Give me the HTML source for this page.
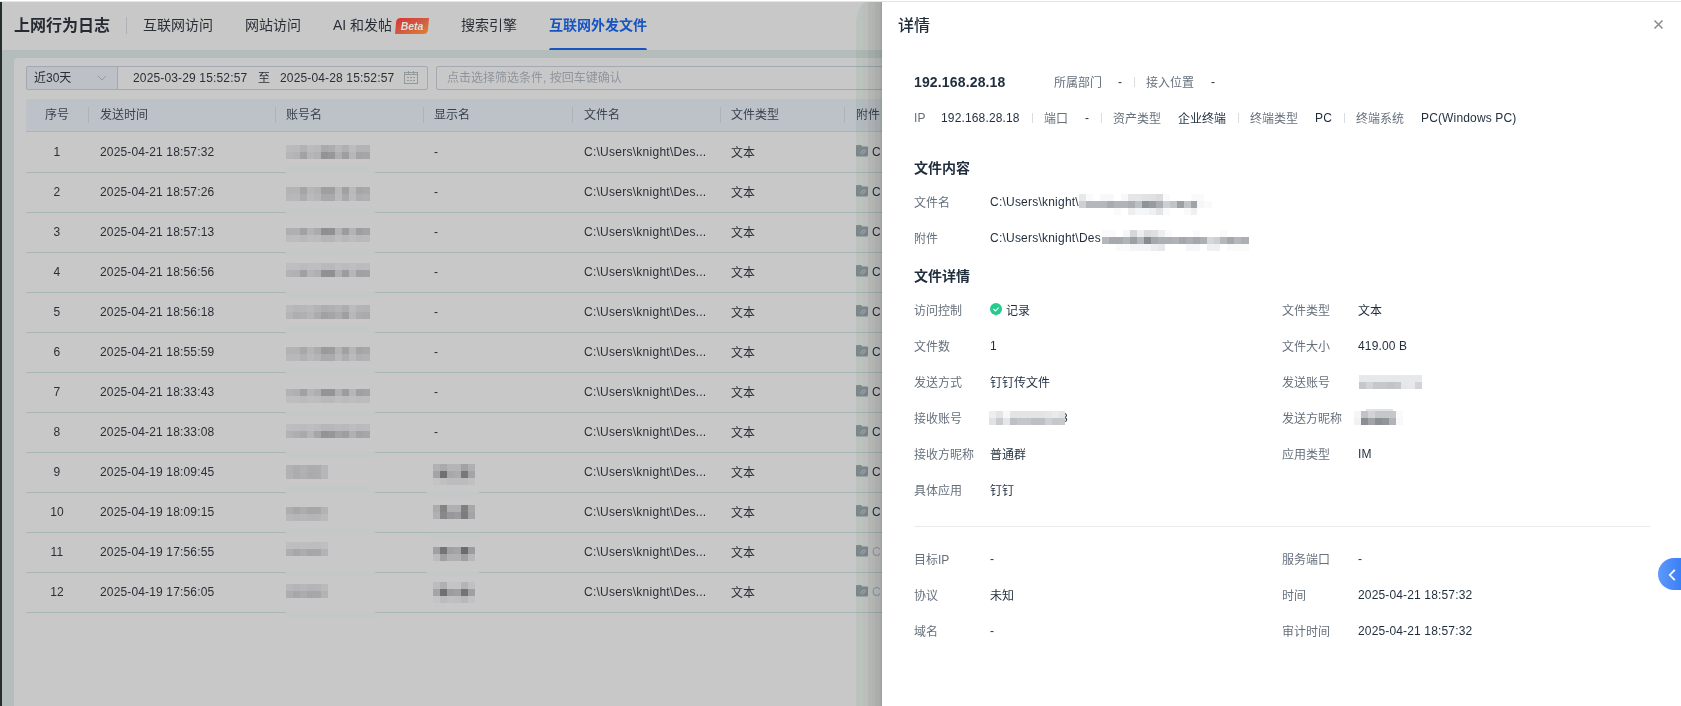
<!DOCTYPE html>
<html lang="zh-CN">
<head>
<meta charset="utf-8">
<title>上网行为日志</title>
<style>
*{box-sizing:border-box;margin:0;padding:0}
html,body{width:1681px;height:706px;overflow:hidden;background:#fff}
body{position:relative;font-family:"Liberation Sans","Noto Sans CJK SC",sans-serif;font-size:12px;color:#1f2d3d}
.abs{position:absolute}
.t{position:absolute;white-space:nowrap;line-height:20px;height:20px;will-change:transform}
.l{letter-spacing:.15px}
svg{display:block}
/* ---------- left dimmed app ---------- */
#topline{left:0;top:0;width:1681px;height:2px;background:linear-gradient(#fff 0,#fff 1px,#e4e4e4 1px,#e4e4e4 2px);z-index:9}
#app{left:0;top:2px;width:900px;height:704px;background:#b4bcbc;overflow:hidden}
#edge{left:0;top:0;width:2px;height:704px;background:#262d2d}
#hdr{left:2px;top:0;width:898px;height:48px;background:#c8c8c8}
#hdr .t{top:13px;font-size:14px;color:#2a2f37}
#hdr .title{left:12px;top:14px;font-size:16px;font-weight:bold;color:#262b33}
#hdr .vd{left:124px;top:15px;width:1px;height:17px;background:#adb1b5}
#hdr .act{color:#1754c2;font-weight:bold}
#hdr .bar{left:547px;top:45.700px;width:98px;height:2.300px;background:#1754c2;border-radius:2px 2px 0 0}
#card{left:14px;top:56px;width:890px;height:660px;background:#c8c8c8;border-radius:4px}
.box{position:absolute;border:1px solid #a2a9b2;background:#c8c8c8;height:24px;top:8px}
.box .t{top:1px;color:#2a2f37}
#thead{left:12px;top:41px;width:880px;height:33px;background:#bdc1c8;border-bottom:1px solid #a9b6b8}
#thead .t{top:6px;color:#39424e}
#thead .vd{position:absolute;top:8px;width:1px;height:16px;background:#b1b3b6}
.row{position:absolute;left:12px;width:880px;height:41px;border-bottom:1px solid #a8b6b6}
.row .t{top:10px;color:#2a2f37}
.row .n{width:62px;left:0;text-align:center}
.mz{position:absolute}
/* ---------- panel ---------- */
#shadow{left:855.6px;top:2px;width:26.4px;height:710px;border-top-left-radius:11px 24px;background:linear-gradient(90deg,rgba(0,100,33,.06) 0px,rgba(0,100,33,.06) 7.4px,rgba(0,0,0,.05) 7.4px,rgba(0,0,0,.05) 12.4px,rgba(0,40,0,.10) 12.4px,rgba(0,40,0,.10) 15.9px,rgba(0,0,0,.10) 15.9px,rgba(0,0,0,.10) 19.4px,rgba(0,29,0,.14) 19.4px,rgba(0,29,0,.14) 21.9px,rgba(0,0,0,.14) 21.9px,rgba(0,0,0,.14) 23.9px,rgba(0,22,0,.18) 23.9px,rgba(0,22,0,.18) 25.4px,rgba(0,0,0,.20) 25.4px,rgba(0,0,0,.20) 26.4px)}
#panel{left:882px;top:2px;width:820px;height:760px;background:#fff}
#panel .t{color:#1f2d3d}
#panel .g{color:#66707c}
#panel .h{font-weight:bold;font-size:14px;color:#1f2d3d}
#panel .vd{position:absolute;width:1px;height:10px;background:#d9dde2}
</style>
</head>
<body>
<div class="abs" id="topline"></div>

<div class="abs" id="app">
  <div class="abs" id="hdr">
    <div class="t title">上网行为日志</div>
    <div class="abs vd"></div>
    <div class="t" style="left:141px">互联网访问</div>
    <div class="t" style="left:243px">网站访问</div>
    <div class="t" style="left:331px">AI 和发帖</div>
    <svg class="abs" style="left:392px;top:15px;will-change:transform" width="36" height="18" viewBox="0 0 36 18"><defs><linearGradient id="bg1" x1="0" y1="0" x2="1" y2="1"><stop offset="0" stop-color="#d8352f"/><stop offset=".5" stop-color="#d05a42"/><stop offset="1" stop-color="#e0832f"/></linearGradient></defs><path d="M6.500 1H35L34 12.500Q33.600 17 29.500 17H1L2 5.500Q2.400 1 6.500 1Z" fill="url(#bg1)"/><text x="18" y="13" text-anchor="middle" font-family="Liberation Sans, sans-serif" font-size="11" font-weight="bold" font-style="italic" fill="#dfe1e1" textLength="22.500" lengthAdjust="spacingAndGlyphs">Beta</text></svg>
    <div class="t" style="left:459px">搜索引擎</div>
    <div class="t act" style="left:547px">互联网外发文件</div>
    <div class="abs bar"></div>
  </div>
  <div class="abs" id="edge"></div>

  <div class="abs" id="card">
    <!-- filter row -->
    <div class="box" style="left:12px;width:92px;border-radius:2px 0 0 2px;background:#bdc0c6">
      <div class="t" style="left:7px">近30天</div>
      <svg class="abs" style="left:70px;top:8px" width="10" height="6" viewBox="0 0 10 6"><path d="M0.800 0.800L5 5L9.200 0.800" fill="none" stroke="#969ba2" stroke-width="1"/></svg>
    </div>
    <div class="box" style="left:103px;width:311px;border-radius:0 2px 2px 0">
      <div class="t l" style="left:15px">2025-03-29 15:52:57</div>
      <div class="t" style="left:140px">至</div>
      <div class="t l" style="left:162px">2025-04-28 15:52:57</div>
      <svg class="abs" style="left:286px;top:4px" width="15" height="14" viewBox="0 0 15 14"><g fill="none" stroke="#8e9a9b" stroke-width="1"><rect x="0.500" y="1.500" width="13" height="11"/><path d="M0.500 3.500H13.500M4.500 0V3.500M9.500 0V3.500"/><path d="M3 6.500H5M6 6.500H8M9 6.500H11M3 9.500H5M6 9.500H8M9 9.500H11"/></g></svg>
    </div>
    <div class="box" style="left:422px;width:480px;border-radius:2px">
      <div class="t" style="left:10px;color:#8e959c">点击选择筛选条件, 按回车键确认</div>
    </div>

    <!-- table head -->
    <div class="abs" id="thead">
      <div class="t" style="left:0;width:62px;text-align:center">序号</div>
      <div class="vd" style="left:62px"></div>
      <div class="t" style="left:74px">发送时间</div>
      <div class="vd" style="left:249px"></div>
      <div class="t" style="left:260px">账号名</div>
      <div class="vd" style="left:397px"></div>
      <div class="t" style="left:408px">显示名</div>
      <div class="vd" style="left:546px"></div>
      <div class="t" style="left:558px">文件名</div>
      <div class="vd" style="left:694px"></div>
      <div class="t" style="left:705px">文件类型</div>
      <div class="vd" style="left:818px"></div>
      <div class="t" style="left:830px">附件</div>
    </div>
    <div class="row" style="top:74px"><div class="t n l">1</div><div class="t l" style="left:74px">2025-04-21 18:57:32</div><div class="t l" style="left:408px">-</div><div class="t" style="left:558px;letter-spacing:.26px">C:\Users\knight\Des...</div><div class="t" style="left:705px;top:11px">文本</div><svg class="abs" style="left:830px;top:13px" width="12" height="12" viewBox="0 0 12 12"><path d="M0 1Q0 0 1 0H4.600Q5.200 0 5.600 0.600L6.200 1.500H11Q12 1.500 12 2.500V10.500Q12 11.500 11 11.500H1Q0 11.500 0 10.500Z" fill="#838a92"/><path d="M4.200 8.300L7.300 5.200Q8.300 4.400 9 5.200Q9.600 6 8.800 6.800L6.200 9.300" stroke="#a6abb2" stroke-width="1.100" fill="none"/></svg><div class="t" style="left:846px;color:#2a2f37">C</div></div>
    <div class="row" style="top:114px"><div class="t n l">2</div><div class="t l" style="left:74px">2025-04-21 18:57:26</div><div class="t l" style="left:408px">-</div><div class="t" style="left:558px;letter-spacing:.26px">C:\Users\knight\Des...</div><div class="t" style="left:705px;top:11px">文本</div><svg class="abs" style="left:830px;top:13px" width="12" height="12" viewBox="0 0 12 12"><path d="M0 1Q0 0 1 0H4.600Q5.200 0 5.600 0.600L6.200 1.500H11Q12 1.500 12 2.500V10.500Q12 11.500 11 11.500H1Q0 11.500 0 10.500Z" fill="#838a92"/><path d="M4.200 8.300L7.300 5.200Q8.300 4.400 9 5.200Q9.600 6 8.800 6.800L6.200 9.300" stroke="#a6abb2" stroke-width="1.100" fill="none"/></svg><div class="t" style="left:846px;color:#2a2f37">C</div></div>
    <div class="row" style="top:154px"><div class="t n l">3</div><div class="t l" style="left:74px">2025-04-21 18:57:13</div><div class="t l" style="left:408px">-</div><div class="t" style="left:558px;letter-spacing:.26px">C:\Users\knight\Des...</div><div class="t" style="left:705px;top:11px">文本</div><svg class="abs" style="left:830px;top:13px" width="12" height="12" viewBox="0 0 12 12"><path d="M0 1Q0 0 1 0H4.600Q5.200 0 5.600 0.600L6.200 1.500H11Q12 1.500 12 2.500V10.500Q12 11.500 11 11.500H1Q0 11.500 0 10.500Z" fill="#838a92"/><path d="M4.200 8.300L7.300 5.200Q8.300 4.400 9 5.200Q9.600 6 8.800 6.800L6.200 9.300" stroke="#a6abb2" stroke-width="1.100" fill="none"/></svg><div class="t" style="left:846px;color:#2a2f37">C</div></div>
    <div class="row" style="top:194px"><div class="t n l">4</div><div class="t l" style="left:74px">2025-04-21 18:56:56</div><div class="t l" style="left:408px">-</div><div class="t" style="left:558px;letter-spacing:.26px">C:\Users\knight\Des...</div><div class="t" style="left:705px;top:11px">文本</div><svg class="abs" style="left:830px;top:13px" width="12" height="12" viewBox="0 0 12 12"><path d="M0 1Q0 0 1 0H4.600Q5.200 0 5.600 0.600L6.200 1.500H11Q12 1.500 12 2.500V10.500Q12 11.500 11 11.500H1Q0 11.500 0 10.500Z" fill="#838a92"/><path d="M4.200 8.300L7.300 5.200Q8.300 4.400 9 5.200Q9.600 6 8.800 6.800L6.200 9.300" stroke="#a6abb2" stroke-width="1.100" fill="none"/></svg><div class="t" style="left:846px;color:#2a2f37">C</div></div>
    <div class="row" style="top:234px"><div class="t n l">5</div><div class="t l" style="left:74px">2025-04-21 18:56:18</div><div class="t l" style="left:408px">-</div><div class="t" style="left:558px;letter-spacing:.26px">C:\Users\knight\Des...</div><div class="t" style="left:705px;top:11px">文本</div><svg class="abs" style="left:830px;top:13px" width="12" height="12" viewBox="0 0 12 12"><path d="M0 1Q0 0 1 0H4.600Q5.200 0 5.600 0.600L6.200 1.500H11Q12 1.500 12 2.500V10.500Q12 11.500 11 11.500H1Q0 11.500 0 10.500Z" fill="#838a92"/><path d="M4.200 8.300L7.300 5.200Q8.300 4.400 9 5.200Q9.600 6 8.800 6.800L6.200 9.300" stroke="#a6abb2" stroke-width="1.100" fill="none"/></svg><div class="t" style="left:846px;color:#2a2f37">C</div></div>
    <div class="row" style="top:274px"><div class="t n l">6</div><div class="t l" style="left:74px">2025-04-21 18:55:59</div><div class="t l" style="left:408px">-</div><div class="t" style="left:558px;letter-spacing:.26px">C:\Users\knight\Des...</div><div class="t" style="left:705px;top:11px">文本</div><svg class="abs" style="left:830px;top:13px" width="12" height="12" viewBox="0 0 12 12"><path d="M0 1Q0 0 1 0H4.600Q5.200 0 5.600 0.600L6.200 1.500H11Q12 1.500 12 2.500V10.500Q12 11.500 11 11.500H1Q0 11.500 0 10.500Z" fill="#838a92"/><path d="M4.200 8.300L7.300 5.200Q8.300 4.400 9 5.200Q9.600 6 8.800 6.800L6.200 9.300" stroke="#a6abb2" stroke-width="1.100" fill="none"/></svg><div class="t" style="left:846px;color:#2a2f37">C</div></div>
    <div class="row" style="top:314px"><div class="t n l">7</div><div class="t l" style="left:74px">2025-04-21 18:33:43</div><div class="t l" style="left:408px">-</div><div class="t" style="left:558px;letter-spacing:.26px">C:\Users\knight\Des...</div><div class="t" style="left:705px;top:11px">文本</div><svg class="abs" style="left:830px;top:13px" width="12" height="12" viewBox="0 0 12 12"><path d="M0 1Q0 0 1 0H4.600Q5.200 0 5.600 0.600L6.200 1.500H11Q12 1.500 12 2.500V10.500Q12 11.500 11 11.500H1Q0 11.500 0 10.500Z" fill="#838a92"/><path d="M4.200 8.300L7.300 5.200Q8.300 4.400 9 5.200Q9.600 6 8.800 6.800L6.200 9.300" stroke="#a6abb2" stroke-width="1.100" fill="none"/></svg><div class="t" style="left:846px;color:#2a2f37">C</div></div>
    <div class="row" style="top:354px"><div class="t n l">8</div><div class="t l" style="left:74px">2025-04-21 18:33:08</div><div class="t l" style="left:408px">-</div><div class="t" style="left:558px;letter-spacing:.26px">C:\Users\knight\Des...</div><div class="t" style="left:705px;top:11px">文本</div><svg class="abs" style="left:830px;top:13px" width="12" height="12" viewBox="0 0 12 12"><path d="M0 1Q0 0 1 0H4.600Q5.200 0 5.600 0.600L6.200 1.500H11Q12 1.500 12 2.500V10.500Q12 11.500 11 11.500H1Q0 11.500 0 10.500Z" fill="#838a92"/><path d="M4.200 8.300L7.300 5.200Q8.300 4.400 9 5.200Q9.600 6 8.800 6.800L6.200 9.300" stroke="#a6abb2" stroke-width="1.100" fill="none"/></svg><div class="t" style="left:846px;color:#2a2f37">C</div></div>
    <div class="row" style="top:394px"><div class="t n l">9</div><div class="t l" style="left:74px">2025-04-19 18:09:45</div><div class="t" style="left:558px;letter-spacing:.26px">C:\Users\knight\Des...</div><div class="t" style="left:705px;top:11px">文本</div><svg class="abs" style="left:830px;top:13px" width="12" height="12" viewBox="0 0 12 12"><path d="M0 1Q0 0 1 0H4.600Q5.200 0 5.600 0.600L6.200 1.500H11Q12 1.500 12 2.500V10.500Q12 11.500 11 11.500H1Q0 11.500 0 10.500Z" fill="#838a92"/><path d="M4.200 8.300L7.300 5.200Q8.300 4.400 9 5.200Q9.600 6 8.800 6.800L6.200 9.300" stroke="#a6abb2" stroke-width="1.100" fill="none"/></svg><div class="t" style="left:846px;color:#2a2f37">C</div></div>
    <div class="row" style="top:434px"><div class="t n l">10</div><div class="t l" style="left:74px">2025-04-19 18:09:15</div><div class="t" style="left:558px;letter-spacing:.26px">C:\Users\knight\Des...</div><div class="t" style="left:705px;top:11px">文本</div><svg class="abs" style="left:830px;top:13px" width="12" height="12" viewBox="0 0 12 12"><path d="M0 1Q0 0 1 0H4.600Q5.200 0 5.600 0.600L6.200 1.500H11Q12 1.500 12 2.500V10.500Q12 11.500 11 11.500H1Q0 11.500 0 10.500Z" fill="#838a92"/><path d="M4.200 8.300L7.300 5.200Q8.300 4.400 9 5.200Q9.600 6 8.800 6.800L6.200 9.300" stroke="#a6abb2" stroke-width="1.100" fill="none"/></svg><div class="t" style="left:846px;color:#2a2f37">C</div></div>
    <div class="row" style="top:474px"><div class="t n l">11</div><div class="t l" style="left:74px">2025-04-19 17:56:55</div><div class="t" style="left:558px;letter-spacing:.26px">C:\Users\knight\Des...</div><div class="t" style="left:705px;top:11px">文本</div><svg class="abs" style="left:830px;top:13px" width="12" height="12" viewBox="0 0 12 12"><path d="M0 1Q0 0 1 0H4.600Q5.200 0 5.600 0.600L6.200 1.500H11Q12 1.500 12 2.500V10.500Q12 11.500 11 11.500H1Q0 11.500 0 10.500Z" fill="#838a92"/><path d="M4.200 8.300L7.300 5.200Q8.300 4.400 9 5.200Q9.600 6 8.800 6.800L6.200 9.300" stroke="#a6abb2" stroke-width="1.100" fill="none"/></svg><div class="t" style="left:846px;color:#9a9fa5">C</div></div>
    <div class="row" style="top:514px"><div class="t n l">12</div><div class="t l" style="left:74px">2025-04-19 17:56:05</div><div class="t" style="left:558px;letter-spacing:.26px">C:\Users\knight\Des...</div><div class="t" style="left:705px;top:11px">文本</div><svg class="abs" style="left:830px;top:13px" width="12" height="12" viewBox="0 0 12 12"><path d="M0 1Q0 0 1 0H4.600Q5.200 0 5.600 0.600L6.200 1.500H11Q12 1.500 12 2.500V10.500Q12 11.500 11 11.500H1Q0 11.500 0 10.500Z" fill="#838a92"/><path d="M4.200 8.300L7.300 5.200Q8.300 4.400 9 5.200Q9.600 6 8.800 6.800L6.200 9.300" stroke="#a6abb2" stroke-width="1.100" fill="none"/></svg><div class="t" style="left:846px;color:#9a9fa5">C</div></div>
    <div class="abs" style="left:272px;top:107.71px;width:89px;height:7px;background:#c4c8c7"></div>
    <svg class="mz" style="left:272px;top:86.8px" width="84.64" height="14.94" viewBox="0 0 84.64 14.94" shape-rendering="crispEdges"><rect x="0" y="0" width="7.27" height="7.27" fill="#bbbbbe"/><rect x="6.97" y="0" width="7.27" height="7.27" fill="#bababd"/><rect x="13.94" y="0" width="7.27" height="7.27" fill="#b2b2b5"/><rect x="20.91" y="0" width="7.27" height="7.27" fill="#bbbbbe"/><rect x="27.88" y="0" width="7.27" height="7.27" fill="#b9b9bc"/><rect x="34.85" y="0" width="7.27" height="7.27" fill="#aaaaad"/><rect x="41.82" y="0" width="7.27" height="7.27" fill="#adadb0"/><rect x="48.79" y="0" width="7.27" height="7.27" fill="#b8b8bb"/><rect x="55.76" y="0" width="7.27" height="7.27" fill="#b0b0b3"/><rect x="62.73" y="0" width="7.27" height="7.27" fill="#bcbcbf"/><rect x="69.7" y="0" width="7.27" height="7.27" fill="#b3b3b6"/><rect x="76.67" y="0" width="7.27" height="7.27" fill="#b3b3b6"/><rect x="0" y="6.97" width="7.27" height="7.27" fill="#b6b6b9"/><rect x="6.97" y="6.97" width="7.27" height="7.27" fill="#b3b3b6"/><rect x="13.94" y="6.97" width="7.27" height="7.27" fill="#a2a2a5"/><rect x="20.91" y="6.97" width="7.27" height="7.27" fill="#b6b6b9"/><rect x="27.88" y="6.97" width="7.27" height="7.27" fill="#b2b2b5"/><rect x="34.85" y="6.97" width="7.27" height="7.27" fill="#939396"/><rect x="41.82" y="6.97" width="7.27" height="7.27" fill="#98989b"/><rect x="48.79" y="6.97" width="7.27" height="7.27" fill="#afafb2"/><rect x="55.76" y="6.97" width="7.27" height="7.27" fill="#9e9ea1"/><rect x="62.73" y="6.97" width="7.27" height="7.27" fill="#b7b7ba"/><rect x="69.7" y="6.97" width="7.27" height="7.27" fill="#a4a4a7"/><rect x="76.67" y="6.97" width="7.27" height="7.27" fill="#a6a6a9"/></svg>
    <div class="abs" style="left:272px;top:149.53px;width:89px;height:7px;background:#c4c8c7"></div>
    <svg class="mz" style="left:272px;top:128.62px" width="84.64" height="14.94" viewBox="0 0 84.64 14.94" shape-rendering="crispEdges"><rect x="0" y="0" width="7.27" height="7.27" fill="#b4b4b7"/><rect x="6.97" y="0" width="7.27" height="7.27" fill="#b4b4b7"/><rect x="13.94" y="0" width="7.27" height="7.27" fill="#a5a5a8"/><rect x="20.91" y="0" width="7.27" height="7.27" fill="#b7b7ba"/><rect x="27.88" y="0" width="7.27" height="7.27" fill="#b2b2b5"/><rect x="34.85" y="0" width="7.27" height="7.27" fill="#9f9fa2"/><rect x="41.82" y="0" width="7.27" height="7.27" fill="#9f9fa2"/><rect x="48.79" y="0" width="7.27" height="7.27" fill="#b8b8bb"/><rect x="55.76" y="0" width="7.27" height="7.27" fill="#a1a1a4"/><rect x="62.73" y="0" width="7.27" height="7.27" fill="#b9b9bc"/><rect x="69.7" y="0" width="7.27" height="7.27" fill="#a6a6a9"/><rect x="76.67" y="0" width="7.27" height="7.27" fill="#a9a9ac"/><rect x="0" y="6.97" width="7.27" height="7.27" fill="#b7b7ba"/><rect x="6.97" y="6.97" width="7.27" height="7.27" fill="#b8b8bb"/><rect x="13.94" y="6.97" width="7.27" height="7.27" fill="#adadb0"/><rect x="20.91" y="6.97" width="7.27" height="7.27" fill="#bababd"/><rect x="27.88" y="6.97" width="7.27" height="7.27" fill="#b6b6b9"/><rect x="34.85" y="6.97" width="7.27" height="7.27" fill="#a9a9ac"/><rect x="41.82" y="6.97" width="7.27" height="7.27" fill="#a9a9ac"/><rect x="48.79" y="6.97" width="7.27" height="7.27" fill="#bababd"/><rect x="55.76" y="6.97" width="7.27" height="7.27" fill="#aaaaad"/><rect x="62.73" y="6.97" width="7.27" height="7.27" fill="#bbbbbe"/><rect x="69.7" y="6.97" width="7.27" height="7.27" fill="#aeaeb1"/><rect x="76.67" y="6.97" width="7.27" height="7.27" fill="#b0b0b3"/></svg>
    <div class="abs" style="left:272px;top:191.35px;width:89px;height:7px;background:#c4c8c7"></div>
    <svg class="mz" style="left:272px;top:170.44px" width="84.64" height="14.94" viewBox="0 0 84.64 14.94" shape-rendering="crispEdges"><rect x="0" y="0" width="7.27" height="7.27" fill="#afafb2"/><rect x="6.97" y="0" width="7.27" height="7.27" fill="#b0b0b3"/><rect x="13.94" y="0" width="7.27" height="7.27" fill="#a1a1a4"/><rect x="20.91" y="0" width="7.27" height="7.27" fill="#b3b3b6"/><rect x="27.88" y="0" width="7.27" height="7.27" fill="#ababae"/><rect x="34.85" y="0" width="7.27" height="7.27" fill="#8f8f92"/><rect x="41.82" y="0" width="7.27" height="7.27" fill="#919194"/><rect x="48.79" y="0" width="7.27" height="7.27" fill="#b3b3b6"/><rect x="55.76" y="0" width="7.27" height="7.27" fill="#9c9c9f"/><rect x="62.73" y="0" width="7.27" height="7.27" fill="#b3b3b6"/><rect x="69.7" y="0" width="7.27" height="7.27" fill="#9e9ea1"/><rect x="76.67" y="0" width="7.27" height="7.27" fill="#a3a3a6"/><rect x="0" y="6.97" width="7.27" height="7.27" fill="#bcbcbf"/><rect x="6.97" y="6.97" width="7.27" height="7.27" fill="#bdbdc0"/><rect x="13.94" y="6.97" width="7.27" height="7.27" fill="#b9b9bc"/><rect x="20.91" y="6.97" width="7.27" height="7.27" fill="#bdbdc0"/><rect x="27.88" y="6.97" width="7.27" height="7.27" fill="#bcbcbf"/><rect x="34.85" y="6.97" width="7.27" height="7.27" fill="#b6b6b9"/><rect x="41.82" y="6.97" width="7.27" height="7.27" fill="#b6b6b9"/><rect x="48.79" y="6.97" width="7.27" height="7.27" fill="#bdbdc0"/><rect x="55.76" y="6.97" width="7.27" height="7.27" fill="#b8b8bb"/><rect x="62.73" y="6.97" width="7.27" height="7.27" fill="#bdbdc0"/><rect x="69.7" y="6.97" width="7.27" height="7.27" fill="#b9b9bc"/><rect x="76.67" y="6.97" width="7.27" height="7.27" fill="#bababd"/></svg>
    <div class="abs" style="left:272px;top:233.17px;width:89px;height:7px;background:#c4c8c7"></div>
    <svg class="mz" style="left:272px;top:205.29px" width="84.64" height="14.94" viewBox="0 0 84.64 14.94" shape-rendering="crispEdges"><rect x="0" y="0" width="7.27" height="7.27" fill="#bebec1"/><rect x="6.97" y="0" width="7.27" height="7.27" fill="#bebec1"/><rect x="13.94" y="0" width="7.27" height="7.27" fill="#bbbbbe"/><rect x="20.91" y="0" width="7.27" height="7.27" fill="#bebec1"/><rect x="27.88" y="0" width="7.27" height="7.27" fill="#bebec1"/><rect x="34.85" y="0" width="7.27" height="7.27" fill="#b9b9bc"/><rect x="41.82" y="0" width="7.27" height="7.27" fill="#b9b9bc"/><rect x="48.79" y="0" width="7.27" height="7.27" fill="#bebec1"/><rect x="55.76" y="0" width="7.27" height="7.27" fill="#bbbbbe"/><rect x="62.73" y="0" width="7.27" height="7.27" fill="#bebec1"/><rect x="69.7" y="0" width="7.27" height="7.27" fill="#bbbbbe"/><rect x="76.67" y="0" width="7.27" height="7.27" fill="#bcbcbf"/><rect x="0" y="6.97" width="7.27" height="7.27" fill="#b3b3b6"/><rect x="6.97" y="6.97" width="7.27" height="7.27" fill="#b1b1b4"/><rect x="13.94" y="6.97" width="7.27" height="7.27" fill="#a0a0a3"/><rect x="20.91" y="6.97" width="7.27" height="7.27" fill="#b5b5b8"/><rect x="27.88" y="6.97" width="7.27" height="7.27" fill="#b0b0b3"/><rect x="34.85" y="6.97" width="7.27" height="7.27" fill="#919194"/><rect x="41.82" y="6.97" width="7.27" height="7.27" fill="#909093"/><rect x="48.79" y="6.97" width="7.27" height="7.27" fill="#b0b0b3"/><rect x="55.76" y="6.97" width="7.27" height="7.27" fill="#9c9c9f"/><rect x="62.73" y="6.97" width="7.27" height="7.27" fill="#b6b6b9"/><rect x="69.7" y="6.97" width="7.27" height="7.27" fill="#a1a1a4"/><rect x="76.67" y="6.97" width="7.27" height="7.27" fill="#a2a2a5"/></svg>
    <div class="abs" style="left:272px;top:268.02px;width:89px;height:7px;background:#c4c8c7"></div>
    <svg class="mz" style="left:272px;top:247.11px" width="84.64" height="14.94" viewBox="0 0 84.64 14.94" shape-rendering="crispEdges"><rect x="0" y="0" width="7.27" height="7.27" fill="#bababd"/><rect x="6.97" y="0" width="7.27" height="7.27" fill="#b6b6b9"/><rect x="13.94" y="0" width="7.27" height="7.27" fill="#b7b7ba"/><rect x="20.91" y="0" width="7.27" height="7.27" fill="#bababd"/><rect x="27.88" y="0" width="7.27" height="7.27" fill="#b4b4b7"/><rect x="34.85" y="0" width="7.27" height="7.27" fill="#aeaeb1"/><rect x="41.82" y="0" width="7.27" height="7.27" fill="#b0b0b3"/><rect x="48.79" y="0" width="7.27" height="7.27" fill="#b4b4b7"/><rect x="55.76" y="0" width="7.27" height="7.27" fill="#adadb0"/><rect x="62.73" y="0" width="7.27" height="7.27" fill="#bbbbbe"/><rect x="69.7" y="0" width="7.27" height="7.27" fill="#b4b4b7"/><rect x="76.67" y="0" width="7.27" height="7.27" fill="#b3b3b6"/><rect x="0" y="6.97" width="7.27" height="7.27" fill="#b5b5b8"/><rect x="6.97" y="6.97" width="7.27" height="7.27" fill="#aeaeb1"/><rect x="13.94" y="6.97" width="7.27" height="7.27" fill="#b0b0b3"/><rect x="20.91" y="6.97" width="7.27" height="7.27" fill="#b6b6b9"/><rect x="27.88" y="6.97" width="7.27" height="7.27" fill="#acacaf"/><rect x="34.85" y="6.97" width="7.27" height="7.27" fill="#a1a1a4"/><rect x="41.82" y="6.97" width="7.27" height="7.27" fill="#a5a5a8"/><rect x="48.79" y="6.97" width="7.27" height="7.27" fill="#acacaf"/><rect x="55.76" y="6.97" width="7.27" height="7.27" fill="#9f9fa2"/><rect x="62.73" y="6.97" width="7.27" height="7.27" fill="#b7b7ba"/><rect x="69.7" y="6.97" width="7.27" height="7.27" fill="#acacaf"/><rect x="76.67" y="6.97" width="7.27" height="7.27" fill="#aaaaad"/></svg>
    <div class="abs" style="left:272px;top:309.84px;width:89px;height:7px;background:#c4c8c7"></div>
    <svg class="mz" style="left:272px;top:288.93px" width="84.64" height="14.94" viewBox="0 0 84.64 14.94" shape-rendering="crispEdges"><rect x="0" y="0" width="7.27" height="7.27" fill="#b3b3b6"/><rect x="6.97" y="0" width="7.27" height="7.27" fill="#b3b3b6"/><rect x="13.94" y="0" width="7.27" height="7.27" fill="#a8a8ab"/><rect x="20.91" y="0" width="7.27" height="7.27" fill="#b5b5b8"/><rect x="27.88" y="0" width="7.27" height="7.27" fill="#acacaf"/><rect x="34.85" y="0" width="7.27" height="7.27" fill="#9a9a9d"/><rect x="41.82" y="0" width="7.27" height="7.27" fill="#9d9da0"/><rect x="48.79" y="0" width="7.27" height="7.27" fill="#b3b3b6"/><rect x="55.76" y="0" width="7.27" height="7.27" fill="#a1a1a4"/><rect x="62.73" y="0" width="7.27" height="7.27" fill="#b6b6b9"/><rect x="69.7" y="0" width="7.27" height="7.27" fill="#a5a5a8"/><rect x="76.67" y="0" width="7.27" height="7.27" fill="#a8a8ab"/><rect x="0" y="6.97" width="7.27" height="7.27" fill="#b8b8bb"/><rect x="6.97" y="6.97" width="7.27" height="7.27" fill="#b8b8bb"/><rect x="13.94" y="6.97" width="7.27" height="7.27" fill="#b2b2b5"/><rect x="20.91" y="6.97" width="7.27" height="7.27" fill="#b9b9bc"/><rect x="27.88" y="6.97" width="7.27" height="7.27" fill="#b4b4b7"/><rect x="34.85" y="6.97" width="7.27" height="7.27" fill="#aaaaad"/><rect x="41.82" y="6.97" width="7.27" height="7.27" fill="#ababae"/><rect x="48.79" y="6.97" width="7.27" height="7.27" fill="#b8b8bb"/><rect x="55.76" y="6.97" width="7.27" height="7.27" fill="#aeaeb1"/><rect x="62.73" y="6.97" width="7.27" height="7.27" fill="#bababd"/><rect x="69.7" y="6.97" width="7.27" height="7.27" fill="#b0b0b3"/><rect x="76.67" y="6.97" width="7.27" height="7.27" fill="#b2b2b5"/></svg>
    <div class="abs" style="left:272px;top:351.66px;width:89px;height:7px;background:#c4c8c7"></div>
    <svg class="mz" style="left:272px;top:330.75px" width="84.64" height="14.94" viewBox="0 0 84.64 14.94" shape-rendering="crispEdges"><rect x="0" y="0" width="7.27" height="7.27" fill="#b3b3b6"/><rect x="6.97" y="0" width="7.27" height="7.27" fill="#b0b0b3"/><rect x="13.94" y="0" width="7.27" height="7.27" fill="#a1a1a4"/><rect x="20.91" y="0" width="7.27" height="7.27" fill="#b5b5b8"/><rect x="27.88" y="0" width="7.27" height="7.27" fill="#aeaeb1"/><rect x="34.85" y="0" width="7.27" height="7.27" fill="#949497"/><rect x="41.82" y="0" width="7.27" height="7.27" fill="#949497"/><rect x="48.79" y="0" width="7.27" height="7.27" fill="#b0b0b3"/><rect x="55.76" y="0" width="7.27" height="7.27" fill="#9c9c9f"/><rect x="62.73" y="0" width="7.27" height="7.27" fill="#b6b6b9"/><rect x="69.7" y="0" width="7.27" height="7.27" fill="#a0a0a3"/><rect x="76.67" y="0" width="7.27" height="7.27" fill="#a3a3a6"/><rect x="0" y="6.97" width="7.27" height="7.27" fill="#bebec1"/><rect x="6.97" y="6.97" width="7.27" height="7.27" fill="#bebec1"/><rect x="13.94" y="6.97" width="7.27" height="7.27" fill="#bbbbbe"/><rect x="20.91" y="6.97" width="7.27" height="7.27" fill="#bebec1"/><rect x="27.88" y="6.97" width="7.27" height="7.27" fill="#bdbdc0"/><rect x="34.85" y="6.97" width="7.27" height="7.27" fill="#b9b9bc"/><rect x="41.82" y="6.97" width="7.27" height="7.27" fill="#b9b9bc"/><rect x="48.79" y="6.97" width="7.27" height="7.27" fill="#bebec1"/><rect x="55.76" y="6.97" width="7.27" height="7.27" fill="#bbbbbe"/><rect x="62.73" y="6.97" width="7.27" height="7.27" fill="#bebec1"/><rect x="69.7" y="6.97" width="7.27" height="7.27" fill="#bbbbbe"/><rect x="76.67" y="6.97" width="7.27" height="7.27" fill="#bcbcbf"/></svg>
    <div class="abs" style="left:272px;top:393.48px;width:89px;height:7px;background:#c4c8c7"></div>
    <svg class="mz" style="left:272px;top:365.6px" width="84.64" height="14.94" viewBox="0 0 84.64 14.94" shape-rendering="crispEdges"><rect x="0" y="0" width="7.27" height="7.27" fill="#bdbdc0"/><rect x="6.97" y="0" width="7.27" height="7.27" fill="#bcbcbf"/><rect x="13.94" y="0" width="7.27" height="7.27" fill="#bbbbbe"/><rect x="20.91" y="0" width="7.27" height="7.27" fill="#bebec1"/><rect x="27.88" y="0" width="7.27" height="7.27" fill="#bbbbbe"/><rect x="34.85" y="0" width="7.27" height="7.27" fill="#b7b7ba"/><rect x="41.82" y="0" width="7.27" height="7.27" fill="#b7b7ba"/><rect x="48.79" y="0" width="7.27" height="7.27" fill="#bababd"/><rect x="55.76" y="0" width="7.27" height="7.27" fill="#b9b9bc"/><rect x="62.73" y="0" width="7.27" height="7.27" fill="#bdbdc0"/><rect x="69.7" y="0" width="7.27" height="7.27" fill="#bababd"/><rect x="76.67" y="0" width="7.27" height="7.27" fill="#bbbbbe"/><rect x="0" y="6.97" width="7.27" height="7.27" fill="#b3b3b6"/><rect x="6.97" y="6.97" width="7.27" height="7.27" fill="#aeaeb1"/><rect x="13.94" y="6.97" width="7.27" height="7.27" fill="#a9a9ac"/><rect x="20.91" y="6.97" width="7.27" height="7.27" fill="#b5b5b8"/><rect x="27.88" y="6.97" width="7.27" height="7.27" fill="#a6a6a9"/><rect x="34.85" y="6.97" width="7.27" height="7.27" fill="#949497"/><rect x="41.82" y="6.97" width="7.27" height="7.27" fill="#969699"/><rect x="48.79" y="6.97" width="7.27" height="7.27" fill="#a3a3a6"/><rect x="55.76" y="6.97" width="7.27" height="7.27" fill="#9e9ea1"/><rect x="62.73" y="6.97" width="7.27" height="7.27" fill="#b0b0b3"/><rect x="69.7" y="6.97" width="7.27" height="7.27" fill="#a3a3a6"/><rect x="76.67" y="6.97" width="7.27" height="7.27" fill="#a6a6a9"/></svg>
    <div class="abs" style="left:272px;top:428.33px;width:89px;height:7px;background:#c4c8c7"></div>
    <svg class="mz" style="left:272px;top:407.42px" width="42.82" height="14.94" viewBox="0 0 42.82 14.94" shape-rendering="crispEdges"><rect x="0" y="0" width="7.27" height="7.27" fill="#b2b2b5"/><rect x="6.97" y="0" width="7.27" height="7.27" fill="#adadb0"/><rect x="13.94" y="0" width="7.27" height="7.27" fill="#b1b1b4"/><rect x="20.91" y="0" width="7.27" height="7.27" fill="#acacaf"/><rect x="27.88" y="0" width="7.27" height="7.27" fill="#adadb0"/><rect x="34.85" y="0" width="7.27" height="7.27" fill="#b6b6b9"/><rect x="0" y="6.97" width="7.27" height="7.27" fill="#b2b2b5"/><rect x="6.97" y="6.97" width="7.27" height="7.27" fill="#acacaf"/><rect x="13.94" y="6.97" width="7.27" height="7.27" fill="#b0b0b3"/><rect x="20.91" y="6.97" width="7.27" height="7.27" fill="#ababae"/><rect x="27.88" y="6.97" width="7.27" height="7.27" fill="#acacaf"/><rect x="34.85" y="6.97" width="7.27" height="7.27" fill="#b6b6b9"/></svg>
    <div class="abs" style="left:272px;top:470.15px;width:89px;height:7px;background:#c4c8c7"></div>
    <svg class="mz" style="left:272px;top:449.24px" width="42.82" height="14.94" viewBox="0 0 42.82 14.94" shape-rendering="crispEdges"><rect x="0" y="0" width="7.27" height="7.27" fill="#aeaeb1"/><rect x="6.97" y="0" width="7.27" height="7.27" fill="#a7a7aa"/><rect x="13.94" y="0" width="7.27" height="7.27" fill="#acacaf"/><rect x="20.91" y="0" width="7.27" height="7.27" fill="#a6a6a9"/><rect x="27.88" y="0" width="7.27" height="7.27" fill="#a7a7aa"/><rect x="34.85" y="0" width="7.27" height="7.27" fill="#b3b3b6"/><rect x="0" y="6.97" width="7.27" height="7.27" fill="#b8b8bb"/><rect x="6.97" y="6.97" width="7.27" height="7.27" fill="#b5b5b8"/><rect x="13.94" y="6.97" width="7.27" height="7.27" fill="#b7b7ba"/><rect x="20.91" y="6.97" width="7.27" height="7.27" fill="#b4b4b7"/><rect x="27.88" y="6.97" width="7.27" height="7.27" fill="#b5b5b8"/><rect x="34.85" y="6.97" width="7.27" height="7.27" fill="#bababd"/></svg>
    <div class="abs" style="left:272px;top:511.97px;width:89px;height:7px;background:#c4c8c7"></div>
    <svg class="mz" style="left:272px;top:484.09px" width="42.82" height="14.94" viewBox="0 0 42.82 14.94" shape-rendering="crispEdges"><rect x="0" y="0" width="7.27" height="7.27" fill="#bebec1"/><rect x="6.97" y="0" width="7.27" height="7.27" fill="#bdbdc0"/><rect x="13.94" y="0" width="7.27" height="7.27" fill="#bebec1"/><rect x="20.91" y="0" width="7.27" height="7.27" fill="#bdbdc0"/><rect x="27.88" y="0" width="7.27" height="7.27" fill="#bdbdc0"/><rect x="34.85" y="0" width="7.27" height="7.27" fill="#bfbfc2"/><rect x="0" y="6.97" width="7.27" height="7.27" fill="#aeaeb1"/><rect x="6.97" y="6.97" width="7.27" height="7.27" fill="#a7a7aa"/><rect x="13.94" y="6.97" width="7.27" height="7.27" fill="#acacaf"/><rect x="20.91" y="6.97" width="7.27" height="7.27" fill="#a6a6a9"/><rect x="27.88" y="6.97" width="7.27" height="7.27" fill="#a7a7aa"/><rect x="34.85" y="6.97" width="7.27" height="7.27" fill="#b3b3b6"/></svg>
    <div class="abs" style="left:272px;top:553.79px;width:89px;height:7px;background:#c4c8c7"></div>
    <svg class="mz" style="left:272px;top:525.91px" width="42.82" height="14.94" viewBox="0 0 42.82 14.94" shape-rendering="crispEdges"><rect x="0" y="0" width="7.27" height="7.27" fill="#b8b8bb"/><rect x="6.97" y="0" width="7.27" height="7.27" fill="#b5b5b8"/><rect x="13.94" y="0" width="7.27" height="7.27" fill="#b7b7ba"/><rect x="20.91" y="0" width="7.27" height="7.27" fill="#b4b4b7"/><rect x="27.88" y="0" width="7.27" height="7.27" fill="#b5b5b8"/><rect x="34.85" y="0" width="7.27" height="7.27" fill="#bababd"/><rect x="0" y="6.97" width="7.27" height="7.27" fill="#aeaeb1"/><rect x="6.97" y="6.97" width="7.27" height="7.27" fill="#a7a7aa"/><rect x="13.94" y="6.97" width="7.27" height="7.27" fill="#acacaf"/><rect x="20.91" y="6.97" width="7.27" height="7.27" fill="#a6a6a9"/><rect x="27.88" y="6.97" width="7.27" height="7.27" fill="#a7a7aa"/><rect x="34.85" y="6.97" width="7.27" height="7.27" fill="#b3b3b6"/></svg>
    <div class="abs" style="left:412.5px;top:433.7px;width:52.500px;height:6.500px;background:#c4c8c7"></div>
    <div class="abs" style="left:412.5px;top:475.5px;width:52.500px;height:6.500px;background:#c4c8c7"></div>
    <div class="abs" style="left:412.5px;top:512.5px;width:52.500px;height:6.500px;background:#c4c8c7"></div>
    <svg class="mz" style="left:419.4px;top:405.7px" width="42.82" height="21.91" viewBox="0 0 42.82 21.91" shape-rendering="crispEdges"><rect x="0" y="0" width="7.27" height="7.27" fill="#b2b2b5"/><rect x="6.97" y="0" width="7.27" height="7.27" fill="#aaaaad"/><rect x="13.94" y="0" width="7.27" height="7.27" fill="#b4b4b7"/><rect x="20.91" y="0" width="7.27" height="7.27" fill="#b4b4b7"/><rect x="27.88" y="0" width="7.27" height="7.27" fill="#a2a2a5"/><rect x="34.85" y="0" width="7.27" height="7.27" fill="#b0b0b3"/><rect x="0" y="6.97" width="7.27" height="7.27" fill="#a4a4a7"/><rect x="6.97" y="6.97" width="7.27" height="7.27" fill="#707073"/><rect x="13.94" y="6.97" width="7.27" height="7.27" fill="#a8a8ab"/><rect x="20.91" y="6.97" width="7.27" height="7.27" fill="#acacaf"/><rect x="27.88" y="6.97" width="7.27" height="7.27" fill="#78787b"/><rect x="34.85" y="6.97" width="7.27" height="7.27" fill="#a4a4a7"/><rect x="0" y="13.94" width="7.27" height="7.27" fill="#c4c4c7"/><rect x="6.97" y="13.94" width="7.27" height="7.27" fill="#c0c0c3"/><rect x="13.94" y="13.94" width="7.27" height="7.27" fill="#bcbcbf"/><rect x="20.91" y="13.94" width="7.27" height="7.27" fill="#bcbcbf"/><rect x="27.88" y="13.94" width="7.27" height="7.27" fill="#bcbcbf"/><rect x="34.85" y="13.94" width="7.27" height="7.27" fill="#c0c0c3"/></svg>
    <svg class="mz" style="left:419.4px;top:447.3px" width="42.82" height="14.94" viewBox="0 0 42.82 14.94" shape-rendering="crispEdges"><rect x="0" y="0" width="7.27" height="7.27" fill="#acacaf"/><rect x="6.97" y="0" width="7.27" height="7.27" fill="#848487"/><rect x="13.94" y="0" width="7.27" height="7.27" fill="#b0b0b3"/><rect x="20.91" y="0" width="7.27" height="7.27" fill="#b0b0b3"/><rect x="27.88" y="0" width="7.27" height="7.27" fill="#808083"/><rect x="34.85" y="0" width="7.27" height="7.27" fill="#a8a8ab"/><rect x="0" y="6.97" width="7.27" height="7.27" fill="#b0b0b3"/><rect x="6.97" y="6.97" width="7.27" height="7.27" fill="#88888b"/><rect x="13.94" y="6.97" width="7.27" height="7.27" fill="#98989b"/><rect x="20.91" y="6.97" width="7.27" height="7.27" fill="#9c9c9f"/><rect x="27.88" y="6.97" width="7.27" height="7.27" fill="#7c7c7f"/><rect x="34.85" y="6.97" width="7.27" height="7.27" fill="#a4a4a7"/></svg>
    <svg class="mz" style="left:419.4px;top:489px" width="42.82" height="14.94" viewBox="0 0 42.82 14.94" shape-rendering="crispEdges"><rect x="0" y="0" width="7.27" height="7.27" fill="#a0a0a3"/><rect x="6.97" y="0" width="7.27" height="7.27" fill="#747477"/><rect x="13.94" y="0" width="7.27" height="7.27" fill="#a0a0a3"/><rect x="20.91" y="0" width="7.27" height="7.27" fill="#a4a4a7"/><rect x="27.88" y="0" width="7.27" height="7.27" fill="#6c6c6f"/><rect x="34.85" y="0" width="7.27" height="7.27" fill="#9c9c9f"/><rect x="0" y="6.97" width="7.27" height="7.27" fill="#bcbcbf"/><rect x="6.97" y="6.97" width="7.27" height="7.27" fill="#a0a0a3"/><rect x="13.94" y="6.97" width="7.27" height="7.27" fill="#b0b0b3"/><rect x="20.91" y="6.97" width="7.27" height="7.27" fill="#b0b0b3"/><rect x="27.88" y="6.97" width="7.27" height="7.27" fill="#a0a0a3"/><rect x="34.85" y="6.97" width="7.27" height="7.27" fill="#b8b8bb"/></svg>
    <svg class="mz" style="left:419.4px;top:524.2px" width="42.82" height="21.91" viewBox="0 0 42.82 21.91" shape-rendering="crispEdges"><rect x="0" y="0" width="7.27" height="7.27" fill="#bcbcbf"/><rect x="6.97" y="0" width="7.27" height="7.27" fill="#b0b0b3"/><rect x="13.94" y="0" width="7.27" height="7.27" fill="#c4c4c7"/><rect x="20.91" y="0" width="7.27" height="7.27" fill="#c4c4c7"/><rect x="27.88" y="0" width="7.27" height="7.27" fill="#b4b4b7"/><rect x="34.85" y="0" width="7.27" height="7.27" fill="#c0c0c3"/><rect x="0" y="6.97" width="7.27" height="7.27" fill="#a4a4a7"/><rect x="6.97" y="6.97" width="7.27" height="7.27" fill="#707073"/><rect x="13.94" y="6.97" width="7.27" height="7.27" fill="#9c9c9f"/><rect x="20.91" y="6.97" width="7.27" height="7.27" fill="#a0a0a3"/><rect x="27.88" y="6.97" width="7.27" height="7.27" fill="#747477"/><rect x="34.85" y="6.97" width="7.27" height="7.27" fill="#a0a0a3"/><rect x="0" y="13.94" width="7.27" height="7.27" fill="#c4c4c7"/><rect x="6.97" y="13.94" width="7.27" height="7.27" fill="#bcbcbf"/><rect x="13.94" y="13.94" width="7.27" height="7.27" fill="#c0c0c3"/><rect x="20.91" y="13.94" width="7.27" height="7.27" fill="#bebec1"/><rect x="27.88" y="13.94" width="7.27" height="7.27" fill="#b8b8bb"/><rect x="34.85" y="13.94" width="7.27" height="7.27" fill="#c2c2c5"/></svg>
  </div>
</div>

<div class="abs" id="shadow"></div>
<div class="abs" id="panel">
  <div class="t " style="left:16px;top:14px;font-size:16px;font-weight:500">详情</div>
  <svg class="abs" style="left:771px;top:17px" width="11" height="11" viewBox="0 0 11 11"><path d="M1.500 1.500L9.500 9.500M9.500 1.500L1.500 9.500" stroke="#8c8c8c" stroke-width="1.600" fill="none"/></svg>
  <div class="t l" style="left:32px;top:70px;font-size:14px;font-weight:bold">192.168.28.18</div>
  <div class="t g" style="left:172px;top:71px;">所属部门</div>
  <div class="t l" style="left:236px;top:70px;">-</div>
  <div class="vd" style="left:252px;top:75px"></div>
  <div class="t g" style="left:264px;top:71px;">接入位置</div>
  <div class="t l" style="left:329px;top:70px;">-</div>
  <div class="t g l" style="left:32px;top:106px;">IP</div>
  <div class="t l" style="left:59px;top:106px;">192.168.28.18</div>
  <div class="vd" style="left:150px;top:111px"></div>
  <div class="t g" style="left:162px;top:107px;">端口</div>
  <div class="t l" style="left:203px;top:106px;">-</div>
  <div class="vd" style="left:219px;top:111px"></div>
  <div class="t g" style="left:231px;top:107px;">资产类型</div>
  <div class="t " style="left:296px;top:107px;">企业终端</div>
  <div class="vd" style="left:356px;top:111px"></div>
  <div class="t g" style="left:368px;top:107px;">终端类型</div>
  <div class="t l" style="left:433px;top:106px;">PC</div>
  <div class="vd" style="left:462px;top:111px"></div>
  <div class="t g" style="left:474px;top:107px;">终端系统</div>
  <div class="t l" style="left:539px;top:106px;">PC(Windows PC)</div>
  <div class="t h" style="left:32px;top:156px;">文件内容</div>
  <div class="t g" style="left:32px;top:191px;">文件名</div>
  <div class="t l" style="left:108px;top:190px;letter-spacing:.22px">C:\Users\knight\</div>
  <svg class="mz" style="left:197px;top:191.9px" width="133.43" height="21.91" viewBox="0 0 133.43 21.91" shape-rendering="crispEdges"><rect x="0" y="0" width="7.27" height="7.27" fill="#e7e8e9"/><rect x="6.97" y="0" width="7.27" height="7.27" fill="#fafafa"/><rect x="13.94" y="0" width="7.27" height="7.27" fill="#ffffff"/><rect x="20.91" y="0" width="7.27" height="7.27" fill="#f8f8f8"/><rect x="27.88" y="0" width="7.27" height="7.27" fill="#f8f8f8"/><rect x="34.85" y="0" width="7.27" height="7.27" fill="#ffffff"/><rect x="41.82" y="0" width="7.27" height="7.27" fill="#f8f8f8"/><rect x="48.79" y="0" width="7.27" height="7.27" fill="#e5e6e7"/><rect x="55.76" y="0" width="7.27" height="7.27" fill="#e5e6e7"/><rect x="62.73" y="0" width="7.27" height="7.27" fill="#e0e2e4"/><rect x="69.7" y="0" width="7.27" height="7.27" fill="#dee0e2"/><rect x="76.67" y="0" width="7.27" height="7.27" fill="#dadcde"/><rect x="83.64" y="0" width="7.27" height="7.27" fill="#fafafa"/><rect x="90.61" y="0" width="7.27" height="7.27" fill="#ffffff"/><rect x="97.58" y="0" width="7.27" height="7.27" fill="#ffffff"/><rect x="104.55" y="0" width="7.27" height="7.27" fill="#ffffff"/><rect x="111.52" y="0" width="7.27" height="7.27" fill="#fafafa"/><rect x="118.49" y="0" width="7.27" height="7.27" fill="#fafafa"/><rect x="125.46" y="0" width="7.27" height="7.27" fill="#ffffff"/><rect x="0" y="6.97" width="7.27" height="7.27" fill="#cdcfd3"/><rect x="6.97" y="6.97" width="7.27" height="7.27" fill="#b4b7bc"/><rect x="13.94" y="6.97" width="7.27" height="7.27" fill="#b4b7bc"/><rect x="20.91" y="6.97" width="7.27" height="7.27" fill="#b4b7bc"/><rect x="27.88" y="6.97" width="7.27" height="7.27" fill="#a8abb0"/><rect x="34.85" y="6.97" width="7.27" height="7.27" fill="#b0b3b8"/><rect x="41.82" y="6.97" width="7.27" height="7.27" fill="#b0b3b8"/><rect x="48.79" y="6.97" width="7.27" height="7.27" fill="#aaadb2"/><rect x="55.76" y="6.97" width="7.27" height="7.27" fill="#bcbfc4"/><rect x="62.73" y="6.97" width="7.27" height="7.27" fill="#909398"/><rect x="69.7" y="6.97" width="7.27" height="7.27" fill="#989ba0"/><rect x="76.67" y="6.97" width="7.27" height="7.27" fill="#aaadb2"/><rect x="83.64" y="6.97" width="7.27" height="7.27" fill="#cdcfd3"/><rect x="90.61" y="6.97" width="7.27" height="7.27" fill="#c1c3c7"/><rect x="97.58" y="6.97" width="7.27" height="7.27" fill="#9c9fa4"/><rect x="104.55" y="6.97" width="7.27" height="7.27" fill="#c1c3c7"/><rect x="111.52" y="6.97" width="7.27" height="7.27" fill="#a0a3a8"/><rect x="118.49" y="6.97" width="7.27" height="7.27" fill="#f5f6f7"/><rect x="125.46" y="6.97" width="7.27" height="7.27" fill="#fafafa"/><rect x="0" y="13.94" width="7.27" height="7.27" fill="#ffffff"/><rect x="6.97" y="13.94" width="7.27" height="7.27" fill="#ffffff"/><rect x="13.94" y="13.94" width="7.27" height="7.27" fill="#ffffff"/><rect x="20.91" y="13.94" width="7.27" height="7.27" fill="#ffffff"/><rect x="27.88" y="13.94" width="7.27" height="7.27" fill="#ffffff"/><rect x="34.85" y="13.94" width="7.27" height="7.27" fill="#fafafa"/><rect x="41.82" y="13.94" width="7.27" height="7.27" fill="#ffffff"/><rect x="48.79" y="13.94" width="7.27" height="7.27" fill="#edeeef"/><rect x="55.76" y="13.94" width="7.27" height="7.27" fill="#f5f6f7"/><rect x="62.73" y="13.94" width="7.27" height="7.27" fill="#f5f6f7"/><rect x="69.7" y="13.94" width="7.27" height="7.27" fill="#eff0f1"/><rect x="76.67" y="13.94" width="7.27" height="7.27" fill="#e2e4e6"/><rect x="83.64" y="13.94" width="7.27" height="7.27" fill="#fafafa"/><rect x="90.61" y="13.94" width="7.27" height="7.27" fill="#ffffff"/><rect x="97.58" y="13.94" width="7.27" height="7.27" fill="#ffffff"/><rect x="104.55" y="13.94" width="7.27" height="7.27" fill="#fafafa"/><rect x="111.52" y="13.94" width="7.27" height="7.27" fill="#eff0f1"/><rect x="118.49" y="13.94" width="7.27" height="7.27" fill="#ffffff"/><rect x="125.46" y="13.94" width="7.27" height="7.27" fill="#ffffff"/></svg>
  <div class="t g" style="left:32px;top:227px;">附件</div>
  <div class="t l" style="left:108px;top:226px;letter-spacing:.22px">C:\Users\knight\Des</div>
  <svg class="mz" style="left:219.9px;top:227.9px" width="147.37" height="21.91" viewBox="0 0 147.37 21.91" shape-rendering="crispEdges"><rect x="0" y="0" width="7.27" height="7.27" fill="#fafafa"/><rect x="6.97" y="0" width="7.27" height="7.27" fill="#fafafa"/><rect x="13.94" y="0" width="7.27" height="7.27" fill="#ffffff"/><rect x="20.91" y="0" width="7.27" height="7.27" fill="#f5f6f7"/><rect x="27.88" y="0" width="7.27" height="7.27" fill="#d6d7da"/><rect x="34.85" y="0" width="7.27" height="7.27" fill="#edeeef"/><rect x="41.82" y="0" width="7.27" height="7.27" fill="#dadcde"/><rect x="48.79" y="0" width="7.27" height="7.27" fill="#dee0e2"/><rect x="55.76" y="0" width="7.27" height="7.27" fill="#edeeef"/><rect x="62.73" y="0" width="7.27" height="7.27" fill="#fafafa"/><rect x="69.7" y="0" width="7.27" height="7.27" fill="#ffffff"/><rect x="76.67" y="0" width="7.27" height="7.27" fill="#ffffff"/><rect x="83.64" y="0" width="7.27" height="7.27" fill="#ffffff"/><rect x="90.61" y="0" width="7.27" height="7.27" fill="#fafafa"/><rect x="97.58" y="0" width="7.27" height="7.27" fill="#ffffff"/><rect x="104.55" y="0" width="7.27" height="7.27" fill="#ffffff"/><rect x="111.52" y="0" width="7.27" height="7.27" fill="#ffffff"/><rect x="118.49" y="0" width="7.27" height="7.27" fill="#fafafa"/><rect x="125.46" y="0" width="7.27" height="7.27" fill="#ffffff"/><rect x="132.43" y="0" width="7.27" height="7.27" fill="#ffffff"/><rect x="139.4" y="0" width="7.27" height="7.27" fill="#ffffff"/><rect x="0" y="6.97" width="7.27" height="7.27" fill="#b4b7bc"/><rect x="6.97" y="6.97" width="7.27" height="7.27" fill="#a6a9ae"/><rect x="13.94" y="6.97" width="7.27" height="7.27" fill="#a6a9ae"/><rect x="20.91" y="6.97" width="7.27" height="7.27" fill="#b0b3b8"/><rect x="27.88" y="6.97" width="7.27" height="7.27" fill="#9c9fa4"/><rect x="34.85" y="6.97" width="7.27" height="7.27" fill="#b4b7bc"/><rect x="41.82" y="6.97" width="7.27" height="7.27" fill="#888b90"/><rect x="48.79" y="6.97" width="7.27" height="7.27" fill="#a4a7ac"/><rect x="55.76" y="6.97" width="7.27" height="7.27" fill="#acafb4"/><rect x="62.73" y="6.97" width="7.27" height="7.27" fill="#acafb4"/><rect x="69.7" y="6.97" width="7.27" height="7.27" fill="#b0b3b8"/><rect x="76.67" y="6.97" width="7.27" height="7.27" fill="#a4a7ac"/><rect x="83.64" y="6.97" width="7.27" height="7.27" fill="#acafb4"/><rect x="90.61" y="6.97" width="7.27" height="7.27" fill="#a4a7ac"/><rect x="97.58" y="6.97" width="7.27" height="7.27" fill="#acafb4"/><rect x="104.55" y="6.97" width="7.27" height="7.27" fill="#d6d7da"/><rect x="111.52" y="6.97" width="7.27" height="7.27" fill="#cdcfd3"/><rect x="118.49" y="6.97" width="7.27" height="7.27" fill="#b4b7bc"/><rect x="125.46" y="6.97" width="7.27" height="7.27" fill="#a4a7ac"/><rect x="132.43" y="6.97" width="7.27" height="7.27" fill="#b4b7bc"/><rect x="139.4" y="6.97" width="7.27" height="7.27" fill="#acafb4"/><rect x="0" y="13.94" width="7.27" height="7.27" fill="#ffffff"/><rect x="6.97" y="13.94" width="7.27" height="7.27" fill="#ffffff"/><rect x="13.94" y="13.94" width="7.27" height="7.27" fill="#fafafa"/><rect x="20.91" y="13.94" width="7.27" height="7.27" fill="#fafafa"/><rect x="27.88" y="13.94" width="7.27" height="7.27" fill="#f3f4f5"/><rect x="34.85" y="13.94" width="7.27" height="7.27" fill="#f3f4f5"/><rect x="41.82" y="13.94" width="7.27" height="7.27" fill="#f3f4f5"/><rect x="48.79" y="13.94" width="7.27" height="7.27" fill="#ebeced"/><rect x="55.76" y="13.94" width="7.27" height="7.27" fill="#e7e8e9"/><rect x="62.73" y="13.94" width="7.27" height="7.27" fill="#ffffff"/><rect x="69.7" y="13.94" width="7.27" height="7.27" fill="#ffffff"/><rect x="76.67" y="13.94" width="7.27" height="7.27" fill="#ffffff"/><rect x="83.64" y="13.94" width="7.27" height="7.27" fill="#f5f6f7"/><rect x="90.61" y="13.94" width="7.27" height="7.27" fill="#f5f6f7"/><rect x="97.58" y="13.94" width="7.27" height="7.27" fill="#ffffff"/><rect x="104.55" y="13.94" width="7.27" height="7.27" fill="#eff0f1"/><rect x="111.52" y="13.94" width="7.27" height="7.27" fill="#eff0f1"/><rect x="118.49" y="13.94" width="7.27" height="7.27" fill="#ffffff"/><rect x="125.46" y="13.94" width="7.27" height="7.27" fill="#fafafa"/><rect x="132.43" y="13.94" width="7.27" height="7.27" fill="#fafafa"/><rect x="139.4" y="13.94" width="7.27" height="7.27" fill="#fafafa"/></svg>
  <div class="t h" style="left:32px;top:264px;">文件详情</div>
  <div class="t g" style="left:32px;top:299px;">访问控制</div>
  <svg class="abs" style="left:108px;top:301.200px" width="12" height="14" viewBox="0 0 12 14"><circle cx="6" cy="6" r="6" fill="#25cb8d"/><path d="M4.800 11.500L6 13L7.200 11.500Z" fill="#25cb8d"/><path d="M3.300 5.800L5.400 7.900L8.700 4.600" stroke="#fff" stroke-width="1.100" fill="none"/></svg>
  <div class="t " style="left:124px;top:299px;">记录</div>
  <div class="t g" style="left:400px;top:299px;">文件类型</div>
  <div class="t " style="left:476px;top:299px;">文本</div>
  <div class="t g" style="left:32px;top:335px;">文件数</div>
  <div class="t l" style="left:108px;top:334px;">1</div>
  <div class="t g" style="left:400px;top:335px;">文件大小</div>
  <div class="t l" style="left:476px;top:334px;">419.00 B</div>
  <div class="t g" style="left:32px;top:371px;">发送方式</div>
  <div class="t " style="left:108px;top:371px;">钉钉传文件</div>
  <div class="t g" style="left:400px;top:371px;">发送账号</div>
  <svg class="mz" style="left:476.8px;top:372.9px" width="63.73" height="14.94" viewBox="0 0 63.73 14.94" shape-rendering="crispEdges"><rect x="0" y="0" width="7.27" height="7.27" fill="#e7e8e9"/><rect x="6.97" y="0" width="7.27" height="7.27" fill="#e7e8e9"/><rect x="13.94" y="0" width="7.27" height="7.27" fill="#e7e8e9"/><rect x="20.91" y="0" width="7.27" height="7.27" fill="#e7e8e9"/><rect x="27.88" y="0" width="7.27" height="7.27" fill="#e7e8e9"/><rect x="34.85" y="0" width="7.27" height="7.27" fill="#e7e8e9"/><rect x="41.82" y="0" width="7.27" height="7.27" fill="#e7e8e9"/><rect x="48.79" y="0" width="7.27" height="7.27" fill="#e7e8e9"/><rect x="55.76" y="0" width="7.27" height="7.27" fill="#e7e8e9"/><rect x="0" y="6.97" width="7.27" height="7.27" fill="#c5c7cb"/><rect x="6.97" y="6.97" width="7.27" height="7.27" fill="#d2d3d6"/><rect x="13.94" y="6.97" width="7.27" height="7.27" fill="#c5c7cb"/><rect x="20.91" y="6.97" width="7.27" height="7.27" fill="#c5c7cb"/><rect x="27.88" y="6.97" width="7.27" height="7.27" fill="#c1c3c7"/><rect x="34.85" y="6.97" width="7.27" height="7.27" fill="#c5c7cb"/><rect x="41.82" y="6.97" width="7.27" height="7.27" fill="#e5e6e7"/><rect x="48.79" y="6.97" width="7.27" height="7.27" fill="#e7e8e9"/><rect x="55.76" y="6.97" width="7.27" height="7.27" fill="#d2d3d6"/></svg>
  <div class="t g" style="left:32px;top:407px;">接收账号</div>
  <svg class="mz" style="left:106.9px;top:408.8px" width="77.67" height="14.94" viewBox="0 0 77.67 14.94" shape-rendering="crispEdges"><rect x="0" y="0" width="7.27" height="7.27" fill="#edeeef"/><rect x="6.97" y="0" width="7.27" height="7.27" fill="#e2e4e6"/><rect x="13.94" y="0" width="7.27" height="7.27" fill="#f7f7f7"/><rect x="20.91" y="0" width="7.27" height="7.27" fill="#e2e4e6"/><rect x="27.88" y="0" width="7.27" height="7.27" fill="#e2e4e6"/><rect x="34.85" y="0" width="7.27" height="7.27" fill="#e2e4e6"/><rect x="41.82" y="0" width="7.27" height="7.27" fill="#e2e4e6"/><rect x="48.79" y="0" width="7.27" height="7.27" fill="#e2e4e6"/><rect x="55.76" y="0" width="7.27" height="7.27" fill="#e5e6e7"/><rect x="62.73" y="0" width="7.27" height="7.27" fill="#e9eaeb"/><rect x="69.7" y="0" width="7.27" height="7.27" fill="#e2e4e6"/><rect x="0" y="6.97" width="7.27" height="7.27" fill="#e0e2e4"/><rect x="6.97" y="6.97" width="7.27" height="7.27" fill="#c9cbcf"/><rect x="13.94" y="6.97" width="7.27" height="7.27" fill="#e5e6e7"/><rect x="20.91" y="6.97" width="7.27" height="7.27" fill="#bcbfc4"/><rect x="27.88" y="6.97" width="7.27" height="7.27" fill="#c3c5c9"/><rect x="34.85" y="6.97" width="7.27" height="7.27" fill="#c3c5c9"/><rect x="41.82" y="6.97" width="7.27" height="7.27" fill="#bcbfc4"/><rect x="48.79" y="6.97" width="7.27" height="7.27" fill="#bcbfc4"/><rect x="55.76" y="6.97" width="7.27" height="7.27" fill="#cdcfd3"/><rect x="62.73" y="6.97" width="7.27" height="7.27" fill="#c5c7cb"/><rect x="69.7" y="6.97" width="7.27" height="7.27" fill="#c7c9cd"/></svg>
  <div class="abs" style="left:182.500px;top:406px;width:4px;height:20px;overflow:hidden;background:#fff"><div class="t l" style="left:-3.500px;top:0">3</div></div>
  <div class="t g" style="left:400px;top:407px;">发送方昵称</div>
  <div class="abs" style="left:484px;top:407.300px;width:27px;height:2px;background:#e0e2e6"></div>
  <svg class="mz" style="left:472.4px;top:408.8px" width="49.79" height="14.94" viewBox="0 0 49.79 14.94" shape-rendering="crispEdges"><rect x="0" y="0" width="7.27" height="7.27" fill="#f5f6f7"/><rect x="6.97" y="0" width="7.27" height="7.27" fill="#c1c3c7"/><rect x="13.94" y="0" width="7.27" height="7.27" fill="#d2d3d6"/><rect x="20.91" y="0" width="7.27" height="7.27" fill="#c5c7cb"/><rect x="27.88" y="0" width="7.27" height="7.27" fill="#c5c7cb"/><rect x="34.85" y="0" width="7.27" height="7.27" fill="#c5c7cb"/><rect x="41.82" y="0" width="7.27" height="7.27" fill="#fafafa"/><rect x="0" y="6.97" width="7.27" height="7.27" fill="#f1f2f3"/><rect x="6.97" y="6.97" width="7.27" height="7.27" fill="#8a8d92"/><rect x="13.94" y="6.97" width="7.27" height="7.27" fill="#a0a3a8"/><rect x="20.91" y="6.97" width="7.27" height="7.27" fill="#8c8f94"/><rect x="27.88" y="6.97" width="7.27" height="7.27" fill="#92959a"/><rect x="34.85" y="6.97" width="7.27" height="7.27" fill="#b0b3b8"/><rect x="41.82" y="6.97" width="7.27" height="7.27" fill="#f8f8f8"/></svg>
  <div class="t g" style="left:32px;top:443px;">接收方昵称</div>
  <div class="t " style="left:108px;top:443px;">普通群</div>
  <div class="t g" style="left:400px;top:443px;">应用类型</div>
  <div class="t l" style="left:476px;top:442px;">IM</div>
  <div class="t g" style="left:32px;top:479px;">具体应用</div>
  <div class="t " style="left:108px;top:479px;">钉钉</div>
  <div class="abs" style="left:32px;top:524px;width:736px;height:1px;background:#e9ebee"></div>
  <div class="t g" style="left:32px;top:548px;">目标IP</div>
  <div class="t l" style="left:108px;top:547px;">-</div>
  <div class="t g" style="left:400px;top:548px;">服务端口</div>
  <div class="t l" style="left:476px;top:547px;">-</div>
  <div class="t g" style="left:32px;top:584px;">协议</div>
  <div class="t " style="left:108px;top:584px;">未知</div>
  <div class="t g" style="left:400px;top:584px;">时间</div>
  <div class="t l" style="left:476px;top:583px;">2025-04-21 18:57:32</div>
  <div class="t g" style="left:32px;top:620px;">域名</div>
  <div class="t l" style="left:108px;top:619px;">-</div>
  <div class="t g" style="left:400px;top:620px;">审计时间</div>
  <div class="t l" style="left:476px;top:619px;">2025-04-21 18:57:32</div>
  <div class="abs" style="left:776px;top:555.800px;width:40px;height:32.300px;border-radius:16.150px 0 0 16.150px;background:linear-gradient(90deg,#5f9afa 0,#3a7df6 24px)"></div>
  <svg class="abs" style="left:786px;top:566px" width="9" height="14" viewBox="0 0 9 14"><path d="M6.800 1.800L1.800 7L6.800 12.200" stroke="#fff" stroke-width="1.800" fill="none"/></svg>
</div>
</body>
</html>
